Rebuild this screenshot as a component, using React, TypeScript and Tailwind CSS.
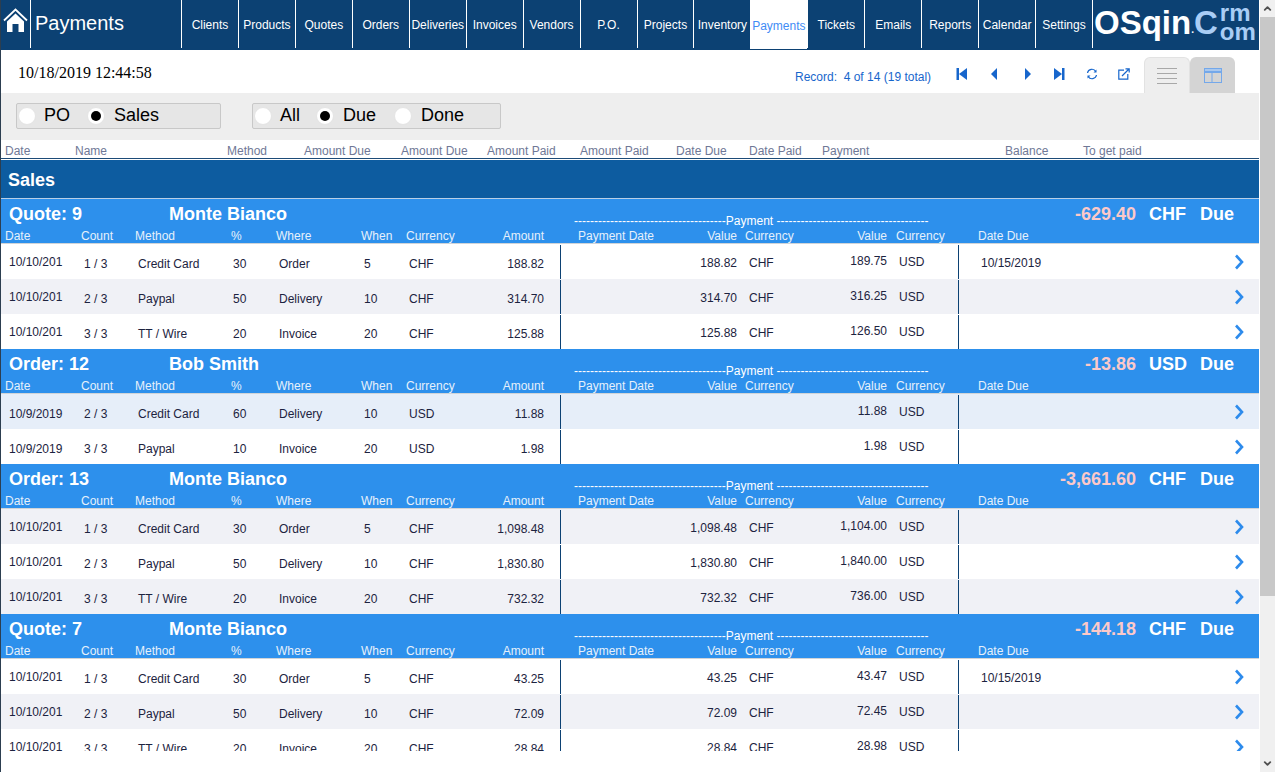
import { ChevronLeft, ChevronRight } from "lucide-react";

type RowData = {
  date: string;
  count: string;
  method: string;
  pct: string;
  where: string;
  when: string;
  cur: string;
  amount: string;
  value?: string;
  usd: string;
  due?: string;
};

type Section = {
  title: string;
  name: string;
  total: string;
  cur: string;
  rows: RowData[];
  bgs: string[];
  dateOffset?: boolean;
};

const tabs = [
  "Clients",
  "Products",
  "Quotes",
  "Orders",
  "Deliveries",
  "Invoices",
  "Vendors",
  "P.O.",
  "Projects",
  "Inventory",
  "Payments",
  "Tickets",
  "Emails",
  "Reports",
  "Calendar",
  "Settings",
];

const sections: Section[] = [
  {
    title: "Quote: 9",
    name: "Monte Bianco",
    total: "-629.40",
    cur: "CHF",
    bgs: ["bg-white", "bg-[#f0f1f6]", "bg-white"],
    rows: [
      { date: "10/10/201", count: "1 / 3", method: "Credit Card", pct: "30", where: "Order", when: "5", cur: "CHF", amount: "188.82", value: "188.82", usd: "189.75", due: "10/15/2019" },
      { date: "10/10/201", count: "2 / 3", method: "Paypal", pct: "50", where: "Delivery", when: "10", cur: "CHF", amount: "314.70", value: "314.70", usd: "316.25" },
      { date: "10/10/201", count: "3 / 3", method: "TT / Wire", pct: "20", where: "Invoice", when: "20", cur: "CHF", amount: "125.88", value: "125.88", usd: "126.50" },
    ],
  },
  {
    title: "Order: 12",
    name: "Bob Smith",
    total: "-13.86",
    cur: "USD",
    bgs: ["bg-[#e6eef9]", "bg-white"],
    dateOffset: true,
    rows: [
      { date: "10/9/2019", count: "2 / 3", method: "Credit Card", pct: "60", where: "Delivery", when: "10", cur: "USD", amount: "11.88", usd: "11.88" },
      { date: "10/9/2019", count: "3 / 3", method: "Paypal", pct: "10", where: "Invoice", when: "20", cur: "USD", amount: "1.98", usd: "1.98" },
    ],
  },
  {
    title: "Order: 13",
    name: "Monte Bianco",
    total: "-3,661.60",
    cur: "CHF",
    bgs: ["bg-[#f0f1f6]", "bg-white", "bg-[#f0f1f6]"],
    rows: [
      { date: "10/10/201", count: "1 / 3", method: "Credit Card", pct: "30", where: "Order", when: "5", cur: "CHF", amount: "1,098.48", value: "1,098.48", usd: "1,104.00" },
      { date: "10/10/201", count: "2 / 3", method: "Paypal", pct: "50", where: "Delivery", when: "10", cur: "CHF", amount: "1,830.80", value: "1,830.80", usd: "1,840.00" },
      { date: "10/10/201", count: "3 / 3", method: "TT / Wire", pct: "20", where: "Invoice", when: "20", cur: "CHF", amount: "732.32", value: "732.32", usd: "736.00" },
    ],
  },
  {
    title: "Quote: 7",
    name: "Monte Bianco",
    total: "-144.18",
    cur: "CHF",
    bgs: ["bg-white", "bg-[#f0f1f6]", "bg-white"],
    rows: [
      { date: "10/10/201", count: "1 / 3", method: "Credit Card", pct: "30", where: "Order", when: "5", cur: "CHF", amount: "43.25", value: "43.25", usd: "43.47", due: "10/15/2019" },
      { date: "10/10/201", count: "2 / 3", method: "Paypal", pct: "50", where: "Delivery", when: "10", cur: "CHF", amount: "72.09", value: "72.09", usd: "72.45" },
      { date: "10/10/201", count: "3 / 3", method: "TT / Wire", pct: "20", where: "Invoice", when: "20", cur: "CHF", amount: "28.84", value: "28.84", usd: "28.98" },
    ],
  },
];

const Radio = ({ on }: { on?: boolean }) => (
  <span className="flex h-[18px] w-[18px] shrink-0 items-center justify-center rounded-full border border-[#e4e4e4] bg-white">
    {on && <span className="h-[10px] w-[10px] rounded-full bg-black" />}
  </span>
);

const SectionHead = ({ s }: { s: Section }) => (
  <div className="h-[45px] border-b border-[#d0d4d8] bg-[#2d90ec] text-white">
    {/* Title line */}
    <div className="flex h-[30px] items-center pl-[8px] text-[18px] font-bold">
      <div className="w-[160px] shrink-0">{s.title}</div>
      <div className="w-[405px] shrink-0">{s.name}</div>
      <div className="mt-[14px] w-[354px] shrink-0 whitespace-nowrap text-[12px] leading-[14px] font-normal">
        --------------------------------------Payment --------------------------------------
      </div>
      <div className="mt-px w-[208px] shrink-0 text-right text-[#fcc9c9]">{s.total}</div>
      <div className="mt-px ml-[13px] w-[51px] shrink-0">{s.cur}</div>
      <div>Due</div>
    </div>
    {/* Column names */}
    <div className="grid h-[14px] grid-cols-[76px_54px_96px_45px_85px_45px_70px_68px_17px_107px_69px_80px_70px_72px_271px] pl-[4px] text-[12px] leading-[14px] text-[#e6f0fb]">
      <div>Date</div>
      <div>Count</div>
      <div>Method</div>
      <div>%</div>
      <div>Where</div>
      <div>When</div>
      <div>Currency</div>
      <div className="text-right">Amount</div>
      <div />
      <div className="pl-[17px]">Payment Date</div>
      <div className="text-right">Value</div>
      <div className="pl-2">Currency</div>
      <div className="text-right">Value</div>
      <div className="pl-[9px]">Currency</div>
      <div className="pl-[19px]">Date Due</div>
    </div>
  </div>
);

const DataRow = ({ r, bg, dateOffset }: { r: RowData; bg: string; dateOffset?: boolean }) => (
  <div
    className={`grid h-[35px] grid-cols-[76px_54px_96px_45px_85px_45px_70px_68px_17px_107px_69px_80px_70px_72px_271px_auto] pl-[4px] text-[12px] leading-[14px] text-[#1c2340] ${bg}`}
  >
    <div className={`flex items-center pl-[4px] ${dateOffset ? "pt-[4px]" : ""}`}>{r.date}</div>
    <div className="flex items-center pt-[5px] pl-[3px]">{r.count}</div>
    <div className="flex items-center pt-[5px] pl-[3px]">{r.method}</div>
    <div className="flex items-center pt-[5px] pl-[2px]">{r.pct}</div>
    <div className="flex items-center pt-[5px] pl-[3px]">{r.where}</div>
    <div className="flex items-center pt-[5px] pl-[3px]">{r.when}</div>
    <div className="flex items-center pt-[5px] pl-[3px]">{r.cur}</div>
    <div className="flex items-center justify-end pt-[5px]">{r.amount}</div>
    <div className="mt-px border-r border-[#0c4173]" />
    <div />
    <div className="flex items-center justify-end pt-[3px]">{r.value}</div>
    <div className="flex items-center pt-[3px] pl-3">{r.value ? "CHF" : ""}</div>
    <div className="flex items-center justify-end pb-[1px]">{r.usd}</div>
    <div className="mt-px flex items-center border-r border-[#0c4173] pb-[1px] pl-3">USD</div>
    <div className="flex items-center pt-[3px] pl-[22px]">{r.due}</div>
    <div className="flex items-center pl-[4px]">
      <svg viewBox="0 0 10 16" className="h-[16px] w-[10px] fill-none stroke-[#2d8bec] stroke-[2.6]">
        <path d="M2 1.5L8 8L2 14.5" />
      </svg>
    </div>
  </div>
);

export default function App() {
  return (
    <div className="flex h-[772px] w-[1275px] overflow-hidden bg-white font-['Liberation_Sans',Arial,sans-serif]">
      <div className="h-full w-[1260px] shrink-0 border-l border-[#2c3e50] pr-px">
        {/* Top bar */}
        <div className="flex h-[50px] bg-[#0c4173] text-white">
          <div className="flex h-[49px] w-[29px] items-start pt-[8px] pl-[2px]">
            <svg viewBox="0 0 25 24" className="h-[24px] w-[25px]">
              <path d="M1 12.5L12.5 1.5L24 12.5" className="fill-none stroke-white stroke-[1.8]" />
              <path d="M12.5 5.5L21 13.5V24H15.5V16H9.5V24H4V13.5z" className="fill-white" />
            </svg>
          </div>
          <div className="flex h-[48px] w-[151px] items-center border-l border-white pb-[3px] pl-[4px] text-[20px]">
            Payments
          </div>
          {tabs.map((t) => (
            <div
              key={t}
              className={`flex w-[56.95px] items-center justify-center pt-[2px] text-[12px] whitespace-nowrap ${
                t === "Payments"
                  ? "h-[49px] bg-white text-[#3f8cf5]"
                  : "h-[48px] border-l border-white"
              }`}
            >
              {t}
            </div>
          ))}
          <div className="flex h-[48px] flex-1 items-start overflow-hidden border-l border-white pl-px font-bold">
            <span className="mt-[4px] text-[33px] leading-[38px]">OSqin</span>
            <span className="mt-[24px] text-[10px] leading-[12px]">.</span>
            <span className="mt-[4px] text-[33px] leading-[38px] text-[#a9cdf5]">C</span>
            <div className="ml-[2px] flex flex-col text-[24px] leading-[16px] text-[#a9cdf5]">
              <span className="mt-[5px]">rm</span>
              <span className="mt-[3px]">om</span>
            </div>
          </div>
        </div>

        {/* Date and record line */}
        <div className="flex h-[43px] items-start pl-[17px]">
          <div className="mt-[14px] w-[777px] font-['Liberation_Serif',serif] text-[16px] leading-[18px] text-black">
            10/18/2019 12:44:58
          </div>
          <div className="mt-[20px] w-[161px] text-[12px] leading-[14px] whitespace-pre text-[#1766cc]">
            {"Record:  4 of 14 (19 total)"}
          </div>
          <div className="mt-[18px] flex items-center text-[#1766cc]">
            <svg viewBox="0 0 12 12" className="mr-[21px] h-[12px] w-[12px] fill-current">
              <rect x="0.5" y="0" width="2.5" height="12" />
              <path d="M11 0v12L3 6z" />
            </svg>
            <svg viewBox="0 0 12 12" className="mr-[20px] h-[12px] w-[12px] fill-current">
              <path d="M8 0v12L2 6z" />
            </svg>
            <svg viewBox="0 0 12 12" className="mr-[20px] h-[12px] w-[12px] fill-current">
              <path d="M4 0v12l6-6z" />
            </svg>
            <svg viewBox="0 0 12 12" className="mr-[21px] h-[12px] w-[12px] fill-current">
              <path d="M1 0v12l8-6z" />
              <rect x="9" y="0" width="2.5" height="12" />
            </svg>
            <svg viewBox="0 0 12 12" className="mr-[20px] h-[12px] w-[12px] fill-none stroke-current stroke-[1.2]">
              <path d="M1.5 5A4.5 4.5 0 0 1 9.8 3.5" />
              <path d="M10.5 7A4.5 4.5 0 0 1 2.2 8.5" />
              <path d="M10.5 1.5v3h-3" className="fill-current stroke-none" />
              <path d="M1.5 10.5v-3h3" className="fill-current stroke-none" />
            </svg>
            <svg viewBox="0 0 12 12" className="h-[12px] w-[12px] fill-none stroke-current stroke-[1.2]">
              <path d="M6 2.2H.8v9h9V6" />
              <path d="M4 8l7-7M7.5.8h3.7v3.7" />
            </svg>
          </div>
          <div className="mt-[7px] ml-[14px] flex h-[36px] w-[46px] items-center justify-center rounded-t-md border border-b-0 border-[#e2e2e2] bg-[#eeeeee]">
            <div className="flex w-[20px] flex-col gap-[4px]">
              <div className="h-px bg-[#a8a8a8]" />
              <div className="h-px bg-[#a8a8a8]" />
              <div className="h-px bg-[#a8a8a8]" />
              <div className="h-px bg-[#a8a8a8]" />
            </div>
          </div>
          <div className="mt-[7px] flex h-[36px] w-[45px] items-center justify-center rounded-t-md bg-[#d4d4d4]">
            <svg viewBox="0 0 18 15" className="h-[15px] w-[18px] fill-none stroke-[#74a8ea]">
              <rect x="0.5" y="0.5" width="17" height="14" />
              <path d="M0.5 4.5h17M8 4.5v10" />
              <rect x="0.5" y="0.5" width="17" height="3" className="fill-[#a9c8ee]" />
            </svg>
          </div>
        </div>

        {/* Radio filters */}
        <div className="flex h-[47px] items-start bg-[#eeeeee] pt-[10px] pl-[15px] text-[18px] leading-[22px] text-black">
          <div className="flex h-[26px] w-[205px] items-center rounded-[2px] border border-[#c8c8c8] bg-[#e6e6e6] pl-px">
            <Radio />
            <span className="ml-[8px] w-[43px] pb-[2px]">PO</span>
            <Radio on />
            <span className="ml-[9px] pb-[2px]">Sales</span>
          </div>
          <div className="ml-[31px] flex h-[26px] w-[249px] items-center rounded-[2px] border border-[#c8c8c8] bg-[#e6e6e6] pl-px">
            <Radio />
            <span className="ml-[8px] w-[36px] pb-[2px]">All</span>
            <Radio on />
            <span className="ml-[9px] w-[51px] pb-[2px]">Due</span>
            <Radio />
            <span className="ml-[9px] pb-[2px]">Done</span>
          </div>
        </div>

        {/* Column names */}
        <div className="flex h-[19px] items-start border-b border-[#1d4b78] pt-[4px] pl-[4px] text-[12px] leading-[14px] text-[#6f7896]">
          <div className="w-[70px]">Date</div>
          <div className="w-[152px]">Name</div>
          <div className="w-[77px]">Method</div>
          <div className="w-[97px]">Amount Due</div>
          <div className="w-[86px]">Amount Due</div>
          <div className="w-[93px]">Amount Paid</div>
          <div className="w-[96px]">Amount Paid</div>
          <div className="w-[73px]">Date Due</div>
          <div className="w-[73px]">Date Paid</div>
          <div className="w-[183px]">Payment</div>
          <div className="w-[78px]">Balance</div>
          <div>To get paid</div>
        </div>

        {/* Sales bar */}
        <div className="mt-px flex h-[39px] items-center border-b border-[#b9cfe6] bg-[#0d5ca0] pt-[2px] pl-[7px] text-[18px] font-bold text-white">
          Sales
        </div>

        {/* Sections, cut off at the bottom as in the app */}
        <div className="h-[552px] overflow-hidden">
          {sections.map((s) => (
            <div key={s.title}>
              <SectionHead s={s} />
              {s.rows.map((r, i) => (
                <DataRow key={r.count} r={r} bg={s.bgs[i]} dateOffset={s.dateOffset} />
              ))}
            </div>
          ))}
        </div>
      </div>

      {/* Scrollbar */}
      <div className="flex h-full w-[15px] shrink-0 flex-col bg-[#f0f0f0]">
        <div className="flex h-[17px] items-center justify-center text-[#505050]">
          <ChevronLeft size={11} strokeWidth={4} className="rotate-90" />
        </div>
        <div className="h-[579px] bg-[#c8c8c8]" />
        <div className="flex-1" />
        <div className="flex h-[17px] items-center justify-center text-[#505050]">
          <ChevronRight size={11} strokeWidth={4} className="rotate-90" />
        </div>
      </div>
    </div>
  );
}
